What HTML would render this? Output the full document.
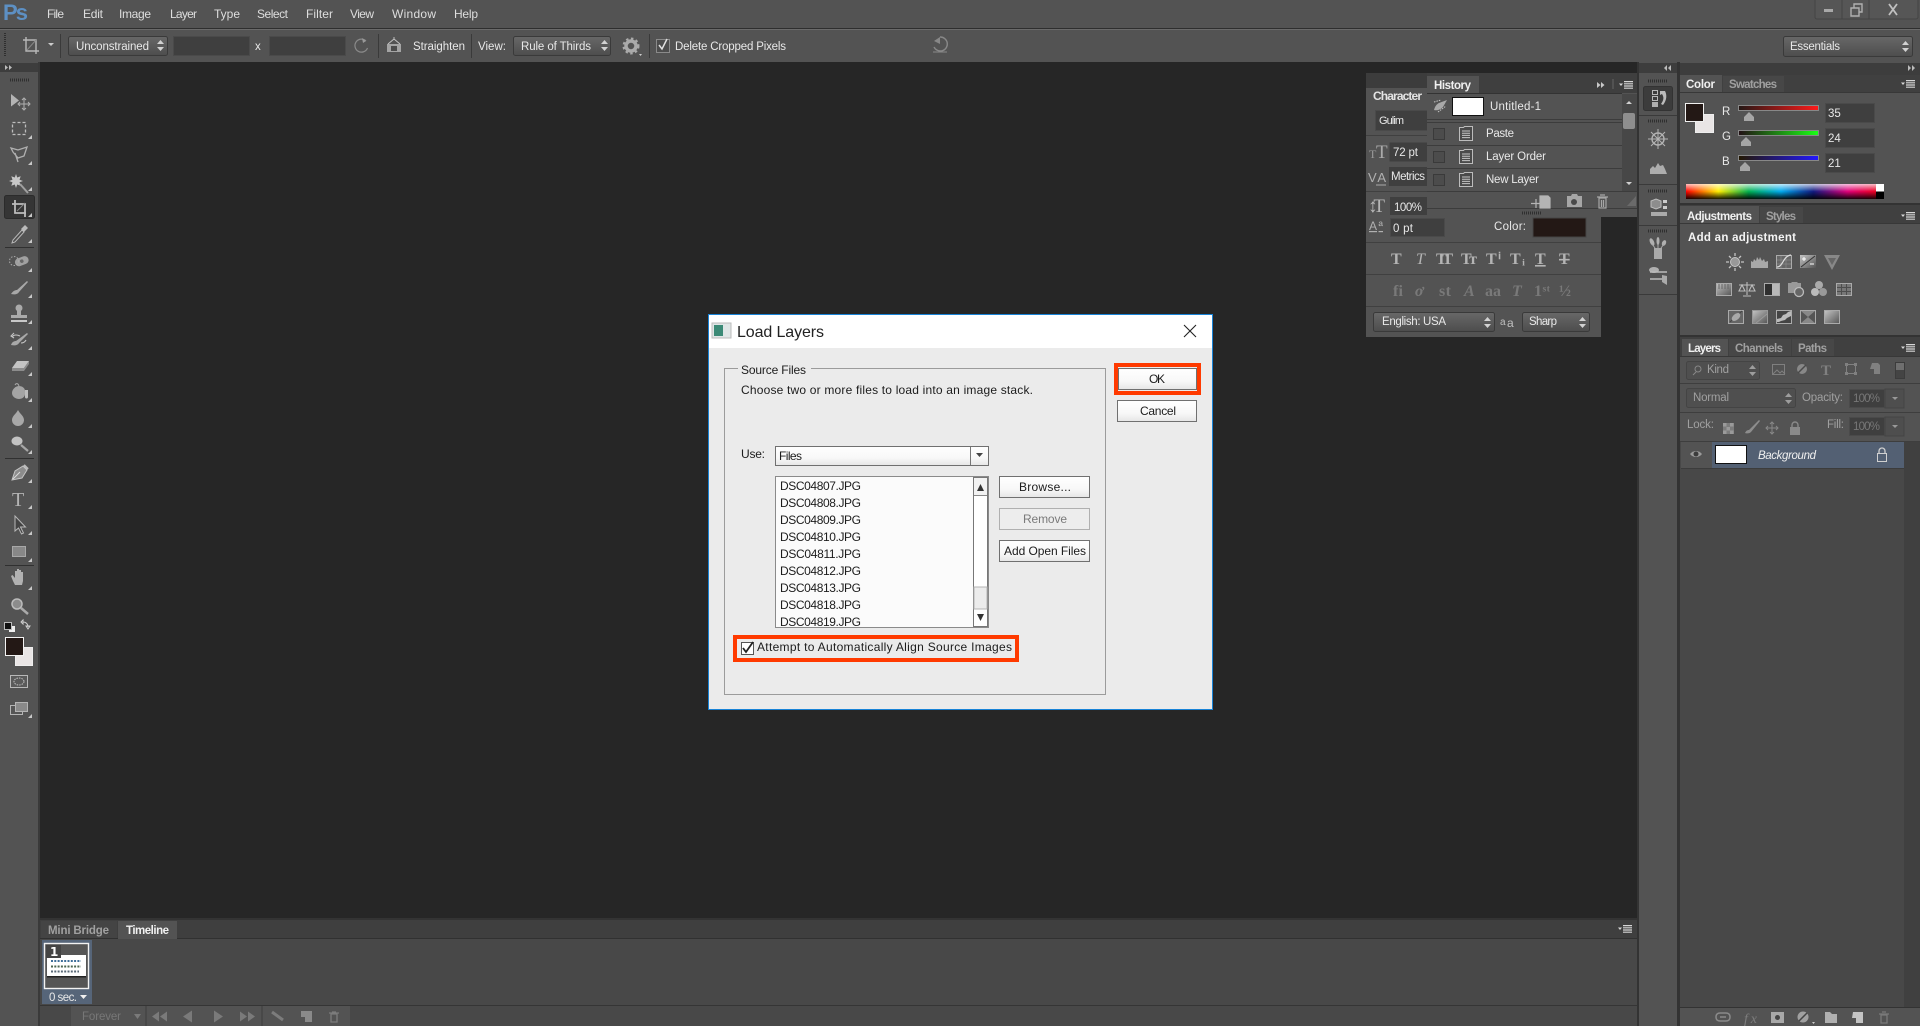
<!DOCTYPE html>
<html><head><meta charset="utf-8"><title>Photoshop Load Layers</title>
<style>
html,body{margin:0;padding:0;background:#262626;overflow:hidden}
svg{display:block}
text{font-family:"Liberation Sans","DejaVu Sans",sans-serif;font-size:11.5px;fill:#d6d6d6}
.m{font-size:12px;fill:#dedede}
.b{fill:#f0f0f0;font-weight:bold}
.t{fill:#e8e8e8}
.o{fill:#a0a0a0}
.dim{fill:#777}
.d{font-size:12px;fill:#1c1c1c}
.ic{fill:#a9a9a9;stroke:none}
.il{fill:none;stroke:#b5b5b5;stroke-width:1.3}
.serif{font-family:"Liberation Serif",serif;font-size:16px;fill:#b4b4b4;font-weight:bold}
</style></head><body>
<svg xmlns="http://www.w3.org/2000/svg" width="1920" height="1026" viewBox="0 0 1920 1026">
<defs>
<linearGradient id="sel" x1="0" y1="0" x2="0" y2="1"><stop offset="0" stop-color="#686868"/><stop offset="1" stop-color="#4d4d4d"/></linearGradient>
<linearGradient id="btn" x1="0" y1="0" x2="0" y2="1"><stop offset="0" stop-color="#fff"/><stop offset=".6" stop-color="#f8f8f8"/><stop offset="1" stop-color="#e6e6e6"/></linearGradient>
<linearGradient id="rs" x1="0" x2="1"><stop offset="0" stop-color="#231815"/><stop offset="1" stop-color="#ff1a1a"/></linearGradient>
<linearGradient id="gs" x1="0" x2="1"><stop offset="0" stop-color="#230f15"/><stop offset="1" stop-color="#1aff15"/></linearGradient>
<linearGradient id="bs" x1="0" x2="1"><stop offset="0" stop-color="#231800"/><stop offset="1" stop-color="#2318ff"/></linearGradient>
<linearGradient id="spec" x1="0" x2="1"><stop offset="0" stop-color="#ff0000"/><stop offset=".17" stop-color="#ffee00"/><stop offset=".33" stop-color="#00b050"/><stop offset=".5" stop-color="#00aaee"/><stop offset=".67" stop-color="#101a80"/><stop offset=".85" stop-color="#e0007a"/><stop offset="1" stop-color="#ee0022"/></linearGradient>
<linearGradient id="fade" x1="0" y1="0" x2="0" y2="1"><stop offset="0" stop-color="#fff" stop-opacity=".75"/><stop offset=".5" stop-color="#fff" stop-opacity="0"/><stop offset=".5" stop-color="#000" stop-opacity="0"/><stop offset="1" stop-color="#000" stop-opacity=".9"/></linearGradient>
<linearGradient id="adj" x1="0" y1="0" x2="1" y2="1"><stop offset="0" stop-color="#c4c4c4"/><stop offset="1" stop-color="#555"/></linearGradient>
<symbol id="ud" viewBox="0 0 7 11" width="7" height="11"><path d="M3.5 0 7 4H0zM0 7h7l-3.5 4z" fill="#d2d2d2"/></symbol>
<symbol id="menu" viewBox="0 0 14 8" width="14" height="8"><path d="M0 2.500h4L2 5zM5 0h9v1.200H5zM5 2.200h9v1.200H5zM5 4.400h9v1.200H5zM5 6.600h9v1.200H5z" fill="#d6d6d6"/></symbol>
<symbol id="tri" viewBox="0 0 4 4" width="4" height="4"><path d="M4 0v4H0z" fill="#c8c8c8"/></symbol>
<symbol id="doc" viewBox="0 0 14 15" width="14" height="15"><path d="M.5 1.500h4l1-1h8v14H.5z" fill="#4a4a4a" stroke="#bcbcbc"/><path d="M3 5h8M3 7.200h8M3 9.400h8M3 11.600h8" stroke="#c6c6c6"/></symbol>
</defs>

<!-- app background -->
<rect width="1920" height="1026" fill="#262626"/>
<rect width="1920" height="28" fill="#535353"/>
<rect y="28" width="1920" height="1" fill="#2e2e2e"/>
<rect y="29" width="1920" height="33" fill="#535353"/>
<rect y="29" width="1920" height="1" fill="#6a6a6a"/>

<!-- Menu bar -->
<text x="3" y="20" style="font-size:22px;font-weight:bold;fill:#5d90c4" textLength="25">Ps</text>
<text class="m" x="47" y="18" textLength="17">File</text>
<text class="m" x="83" y="18" textLength="20">Edit</text>
<text class="m" x="119" y="18" textLength="32">Image</text>
<text class="m" x="170" y="18" textLength="27">Layer</text>
<text class="m" x="214" y="18" textLength="26">Type</text>
<text class="m" x="257" y="18" textLength="31">Select</text>
<text class="m" x="306" y="18" textLength="27">Filter</text>
<text class="m" x="350" y="18" textLength="24">View</text>
<text class="m" x="392" y="18" textLength="44">Window</text>
<text class="m" x="454" y="18" textLength="24">Help</text>
<!-- window buttons -->
<rect x="1815" y="-2" width="103" height="21" rx="2" fill="#565656" stroke="#444"/>
<path d="M1842 0v19M1869 0v19" stroke="#444"/>
<rect x="1824" y="9" width="9" height="3" fill="#a8a8a8"/>
<path d="M1851 8h8v8h-8zM1854 8V4h8v8h-3" fill="none" stroke="#b0b0b0" stroke-width="1.400"/>
<path d="M1889 4l8 11M1897 4l-8 11" stroke="#c0c0c0" stroke-width="1.800"/>

<!-- Options bar -->
<line x1="5" y1="33" x2="5" y2="56" stroke="#2f2f2f" stroke-width="2" stroke-dasharray="1 1"/>
<g fill="none" stroke="#b8b8b8" stroke-width="1.400"><path d="M26 37v14h13M23 40h13v14"/></g>
<path d="M27 50l9-10" stroke="#888"/>
<path d="M48 43h6l-3 3z" fill="#ccc"/>
<path d="M60.500 34v24M378.500 34v24M471.500 34v24M649.500 34v24" stroke="#3a3a3a"/>
<rect x="68.500" y="36.500" width="99" height="19" rx="2" fill="url(#sel)" stroke="#3a3a3a"/>
<text class="t" x="76" y="50" textLength="73">Unconstrained</text>
<use href="#ud" x="157" y="40"/>
<rect x="173.500" y="36.500" width="76" height="19" fill="#3f3f3f" stroke="#4a4a4a"/>
<text class="t" x="255" y="50">x</text>
<rect x="269.500" y="36.500" width="76" height="19" fill="#3f3f3f" stroke="#4a4a4a"/>
<path d="M366 41a6.500 6.500 0 1 0 1.500 7" fill="none" stroke="#8a8a8a" stroke-width="1.200"/><path d="M362 38l4 3-3 2z" fill="#999"/>
<rect x="387" y="44" width="14" height="8" fill="#a4a4a4"/><path d="M388 44l6-5 6 5" fill="none" stroke="#c4c4c4"/><rect x="391" y="46" width="6" height="5" fill="#4c4c4c"/><path d="M394 37v2" stroke="#bbb"/>
<text class="t" x="413" y="50" textLength="52">Straighten</text>
<text class="t" x="478" y="50" textLength="28">View:</text>
<rect x="513.500" y="36.500" width="97" height="19" rx="2" fill="url(#sel)" stroke="#3a3a3a"/>
<text class="t" x="521" y="50" textLength="70">Rule of Thirds</text>
<use href="#ud" x="601" y="40"/>
<circle cx="631" cy="46" r="5" fill="none" stroke="#aaa" stroke-width="3.500"/><circle cx="631" cy="46" r="7.500" fill="none" stroke="#aaa" stroke-width="2" stroke-dasharray="2.500 2.500"/>
<path d="M639 54h3l-1.500 2z" fill="#ccc"/>
<rect x="656.500" y="39.500" width="13" height="13" fill="#4c4c4c" stroke="#8a8a8a"/>
<path d="M659 45l3 4 5-10" fill="none" stroke="#e0e0e0" stroke-width="1.500"/>
<text class="t" x="675" y="50" textLength="111">Delete Cropped Pixels</text>
<path d="M940 37a7 7 0 1 1-6 10" fill="none" stroke="#888" stroke-width="1.400"/><path d="M934 41l6-4v7z" fill="#888"/><path d="M933 52h14" stroke="#888"/>
<rect x="1783.500" y="36.500" width="129" height="20" rx="2" fill="url(#sel)" stroke="#3a3a3a"/>
<text class="t" x="1790" y="50" textLength="50">Essentials</text>
<use href="#ud" x="1902" y="41"/>

<!-- Left toolbar -->
<rect x="0" y="62" width="38" height="964" fill="#535353"/>
<rect x="38" y="62" width="2" height="964" fill="#3a3a3a"/>
<rect x="0" y="63" width="38" height="9" fill="#3d3d3d"/>
<path d="M5 65l3 2.500-3 2.500zM9 65l3 2.500-3 2.500z" fill="#bbb"/>
<line x1="10" y1="80" x2="29" y2="80" stroke="#2f2f2f" stroke-width="3" stroke-dasharray="1 1"/>
<rect x="4.500" y="195.500" width="30" height="23" rx="2" fill="#353535" stroke="#2b2b2b"/>
<path d="M5 247.500h29M5 458.500h29M5 565.500h29" stroke="#303030"/>
<!-- tool flyout triangles -->
<g>
<use href="#tri" x="28" y="135"/><use href="#tri" x="28" y="161"/><use href="#tri" x="28" y="187"/><use href="#tri" x="28" y="213"/><use href="#tri" x="28" y="239"/><use href="#tri" x="28" y="268"/><use href="#tri" x="28" y="294"/><use href="#tri" x="28" y="320"/><use href="#tri" x="28" y="346"/><use href="#tri" x="28" y="372"/><use href="#tri" x="28" y="398"/><use href="#tri" x="28" y="424"/><use href="#tri" x="28" y="450"/><use href="#tri" x="28" y="479"/><use href="#tri" x="28" y="505"/><use href="#tri" x="28" y="531"/><use href="#tri" x="28" y="558"/><use href="#tri" x="28" y="586"/><use href="#tri" x="28" y="714"/>
</g>
<!-- move -->
<path d="M11 94l8 6.500-8 6z" fill="#b4b4b4"/><path d="M24 99v10M19 104h10" stroke="#b0b0b0"/><path d="M22 100l2-2 2 2M22 108l2 2 2-2M20 102l-2 2 2 2M28 102l2 2-2 2" fill="none" stroke="#b0b0b0"/>
<!-- marquee -->
<rect x="12.500" y="122.500" width="13" height="12" fill="none" stroke="#bdbdbd" stroke-width="1.300" stroke-dasharray="3 2"/>
<!-- lasso -->
<path d="M11 148l7 2 9-3-3 9-6 2-5-6zM15 153l3 9" fill="none" stroke="#b0b0b0" stroke-width="1.300"/>
<!-- wand -->
<path d="M16 174l1.200 3.500 3.500-1.200-1.200 3.500 3.500 1.200-3.500 1.200 1.200 3.500-3.500-1.200-1.200 3.500-1.200-3.500-3.500 1.200 1.200-3.500-3.500-1.200 3.500-1.200-1.200-3.500 3.500 1.200z" fill="#c8c8c8"/><path d="M20 184l8 9" stroke="#a0a0a0" stroke-width="2"/>
<!-- crop -->
<path d="M15 200v13h11M12 204h13v13" fill="none" stroke="#bcbcbc" stroke-width="1.800"/><path d="M17 211l8-8" stroke="#888"/>
<!-- eyedropper -->
<path d="M13 240l-1 3 3-1 9-10-2-2z" fill="#4e4e4e" stroke="#b8b8b8"/><path d="M21 229l4-4 3 3-4 4z" fill="#bbb"/>
<!-- heal -->
<g transform="rotate(-20 21 262)"><rect x="15" y="257.500" width="14" height="8" rx="4" fill="#a0a0a0"/><circle cx="22" cy="261.500" r="1.800" fill="#666"/></g><circle cx="14" cy="261" r="4.500" fill="none" stroke="#aaa" stroke-dasharray="1.500 1.500"/>
<!-- brush -->
<path d="M27 281l-10 9c-2 0-4 1-6 4 4 1 7 0 8-2l9-10z" fill="#a8a8a8"/>
<!-- stamp -->
<circle cx="19" cy="308" r="3.500" fill="#aaa"/><path d="M17 310h4v5h6v3H11v-3h6z" fill="#aaa"/><rect x="11" y="320" width="16" height="2" fill="#c8c8c8"/>
<!-- history brush -->
<path d="M27 333l-11 8c-2 0-4 1-5 4 4 1 7 0 8-2l9-9z" fill="#a8a8a8"/><path d="M12 337c2-3 6-2 8-1M14 333l-3 3 3 2M26 340c-1 2-3 3-5 3" fill="none" stroke="#c4c4c4" stroke-width="1.100"/>
<!-- eraser -->
<path d="M12 368l5-7h12l-5 7z" fill="#c4c4c4"/><path d="M12 368h12v3H12zM24 368l5-7v3l-5 7z" fill="#8c8c8c"/>
<!-- bucket -->
<path d="M12 393c0-4 4-7 7-7s6 2 6 5v3c0 3-3 5-6 5s-7-2-7-6z" fill="#a4a4a4"/><path d="M19 386c-1-3-3-3-4-1" fill="none" stroke="#aaa"/><path d="M25 390h3v7a1.500 1.500 0 0 1-3 0z" fill="#bcbcbc"/>
<!-- blur -->
<path d="M18 410c-2 4-6 6-6 10a6 6 0 0 0 12 0c0-4-4-6-6-10z" fill="#a8a8a8"/>
<!-- dodge -->
<ellipse cx="17" cy="441" rx="5.500" ry="4.500" fill="#c2c2c2"/><path d="M21 445l7 6" stroke="#a6a6a6" stroke-width="2.200"/>
<!-- pen -->
<path d="M12 480l3-9 8-5 4 4-5 8z" fill="#8c8c8c" stroke="#c4c4c4"/><path d="M13 479l7-7" stroke="#dadada"/><path d="M24 465l4 4" stroke="#bbb" stroke-width="2"/>
<!-- type -->
<text x="12" y="506" style="font-family:'Liberation Serif',serif;font-size:20px;fill:#b4b4b4">T</text>
<!-- path select -->
<path d="M15 516v15l3.500-3 3 6 2-1-3-6h5z" fill="#444" stroke="#b8b8b8"/>
<!-- shape -->
<rect x="12.500" y="546.500" width="13" height="10" fill="#888" stroke="#a8a8a8"/>
<!-- hand -->
<path d="M13 581l-2-5 1.500-1 2.500 3v-7h2v6-8h2v8-7h2v7-5h2v9l-1 4H15z" fill="#b2b2b2"/>
<!-- zoom -->
<circle cx="17" cy="604" r="5" fill="#8c8c8c" stroke="#bcbcbc" stroke-width="1.500"/><path d="M21 608l7 6" stroke="#aaa" stroke-width="2.500"/>
<!-- default colors -->
<rect x="9" y="626" width="6" height="6" fill="#eee"/><rect x="4.500" y="622.500" width="7" height="7" fill="#111" stroke="#bbb"/>
<path d="M23 622c3 0 5 2 5 5M23 620v4l-2-2zM26 626h4l-2 3z" fill="none" stroke="#cfcfcf"/>
<!-- fg bg -->
<rect x="15.500" y="647.500" width="17" height="18" fill="#e9e5e5" stroke="#eee"/>
<rect x="5.500" y="637.500" width="18" height="18" fill="#231815" stroke="#f2f2f2"/>
<!-- quick mask -->
<rect x="10.500" y="675.500" width="17" height="12" fill="#5a5a5a" stroke="#b8b8b8"/><ellipse cx="19" cy="681.500" rx="5" ry="3.500" fill="none" stroke="#c0c0c0" stroke-dasharray="1.500 1"/>
<!-- screen -->
<rect x="10.500" y="705.500" width="12" height="9" fill="#555" stroke="#b4b4b4"/><rect x="15.500" y="702.500" width="12" height="9" fill="#8a8a8a" stroke="#b4b4b4"/>

<!-- Timeline panel -->
<rect x="40" y="918" width="1597" height="2" fill="#333"/>
<rect x="40" y="920" width="1597" height="106" fill="#484848"/>
<rect x="40" y="920" width="1597" height="18" fill="#3f3f3f"/>
<rect x="40" y="938" width="1597" height="1" fill="#313131"/>
<rect x="41" y="921" width="76" height="17" fill="#444"/>
<rect x="118" y="921" width="59" height="18" fill="#535353"/>
<text class="o" x="48" y="934" textLength="61" style="font-weight:bold">Mini Bridge</text>
<text x="126" y="934" textLength="43" style="font-weight:bold;fill:#f0f0f0">Timeline</text>
<use href="#menu" x="1618" y="925"/>
<rect x="42" y="940" width="50" height="64" fill="#566579"/>
<rect x="44.500" y="943.500" width="44" height="45" fill="#555" stroke="#f2f2f2" stroke-width="1.400"/>
<rect x="47" y="955" width="39" height="22" fill="#fff"/>
<line x1="51" y1="961" x2="81" y2="961" stroke="#3f6f9a" stroke-width="2" stroke-dasharray="2 1.300"/>
<line x1="51" y1="966.500" x2="81" y2="966.500" stroke="#4c6650" stroke-width="2" stroke-dasharray="2 1.300"/>
<line x1="51" y1="971.500" x2="79" y2="971.500" stroke="#5a6a78" stroke-width="2" stroke-dasharray="2 1.300"/>
<rect x="47" y="976" width="39" height="1.500" fill="#222"/>
<rect x="46" y="945" width="15" height="13" fill="#444"/>
<text x="50" y="956" style="font-weight:bold;font-size:12px;fill:#fff;font-family:'DejaVu Sans',sans-serif">1</text>
<text x="49" y="1001" class="t" textLength="28">0 sec.</text>
<path d="M80 995h7l-3.500 4z" fill="#f0f0f0"/>
<rect x="40" y="1005" width="1597" height="1" fill="#353535"/>
<rect x="71" y="1006" width="279" height="20" fill="#535353"/>
<path d="M146 1006v20M262 1006v20" stroke="#3e3e3e"/>
<text class="dim" x="82" y="1020" textLength="39">Forever</text>
<path d="M134 1014h7l-3.500 5zM152 1016.500l7-5v10zM160 1016.500l7-5v10zM183 1016.500l9-6v12zM214 1010.500l9 6-9 6zM240 1011.500l7 5-7 5zM248 1011.500l7 5-7 5z" fill="#7a7a7a"/>
<path d="M272 1012l11 8" stroke="#7c7c7c" stroke-width="3"/>
<path d="M301 1011h11v11h-7v-5h-4z" fill="#8a8a8a"/>
<path d="M329 1013h10M331 1014v8h6v-8zM332 1012h4" fill="none" stroke="#7c7c7c" stroke-width="1.300"/>

<!-- Character panel -->
<rect x="1366" y="73" width="235" height="264" fill="#535353"/>
<rect x="1366" y="73" width="235" height="15" fill="#3c3c3c"/>
<rect x="1366" y="88" width="62" height="17" fill="#535353"/>
<text x="1373" y="100" textLength="49" style="font-size:12px;font-weight:bold;fill:#e4e4e4">Character</text>
<rect x="1375.500" y="110.500" width="60" height="20" fill="#3f3f3f" stroke="#4a4a4a"/>
<text class="t" x="1379" y="124" textLength="25" style="font-size:11px">Gulim</text>
<path d="M1366 135.500h235M1366 191.500h235M1366 242.500h235M1366 274.500h235M1366 306.500h235" stroke="#404040"/>
<text x="1369" y="158" style="font-family:'Liberation Serif',serif;font-size:12px;fill:#999">T</text><text x="1376" y="158" style="font-family:'Liberation Serif',serif;font-size:19px;fill:#aaa">T</text>
<rect x="1389.500" y="142.500" width="50" height="19" fill="#3f3f3f"/>
<text class="t" x="1393" y="156" textLength="25">72 pt</text>
<text x="1368" y="182" style="font-size:13px;fill:#b0b0b0" textLength="18">VA</text><path d="M1376 185h10" stroke="#aaa"/>
<rect x="1389" y="167" width="50" height="19" fill="#3f3f3f"/>
<text class="t" x="1391" y="180" textLength="34">Metrics</text>
<text x="1368" y="212" style="font-family:'Liberation Serif',serif;font-size:19px;fill:#b8b8b8" textLength="17">↕T</text>
<rect x="1390" y="197" width="50" height="18" fill="#3f3f3f"/>
<text class="t" x="1394" y="211" textLength="28">100%</text>
<text x="1369" y="230" style="font-size:12px;fill:#b0b0b0;text-decoration:underline" textLength="14">Aª</text>
<rect x="1390.500" y="218.500" width="54" height="18" fill="#3f3f3f" stroke="#4a4a4a"/>
<text class="t" x="1393" y="232" textLength="20">0 pt</text>
<text class="t" x="1494" y="230" textLength="32">Color:</text>
<rect x="1533" y="218" width="53" height="19" fill="#231815" stroke="#444"/>
<g class="serif">
<text class="serif" x="1391" y="264">T</text><text class="serif" x="1416" y="264" style="font-style:italic;font-weight:normal">T</text><text class="serif" x="1436" y="264" textLength="17">TT</text><text class="serif" x="1461" y="264" textLength="16">Tт</text><text class="serif" x="1486" y="264" textLength="15">Tⁱ</text><text class="serif" x="1510" y="264" textLength="15">Tᵢ</text><text class="serif" x="1535" y="264" style="text-decoration:underline">T</text><text class="serif" x="1559" y="264" style="text-decoration:line-through">T</text>
</g>
<g style="opacity:.55"><text class="serif" x="1393" y="296" textLength="10" style="fill:#999">fi</text><text class="serif" x="1415" y="296" style="font-style:italic;fill:#999">ơ</text><text class="serif" x="1439" y="296" textLength="12" style="fill:#999">st</text><text class="serif" x="1464" y="296" style="font-style:italic;fill:#999">A</text><text class="serif" x="1485" y="296" textLength="16" style="fill:#999">aa</text><text class="serif" x="1512" y="296" style="font-style:italic;fill:#999">T</text><text class="serif" x="1534" y="296" textLength="16" style="fill:#999">1ˢᵗ</text><text class="serif" x="1559" y="296" textLength="14" style="fill:#999">½</text></g>
<rect x="1373.500" y="312.500" width="121" height="19" rx="2" fill="url(#sel)" stroke="#3a3a3a"/>
<text class="t" x="1382" y="325" textLength="64">English: USA</text>
<use href="#ud" x="1484" y="317"/>
<text x="1500" y="325" style="font-size:10px;fill:#c0c0c0">a</text><text x="1507" y="327" style="font-size:12px;fill:#c0c0c0">a</text>
<rect x="1522.500" y="312.500" width="67" height="19" rx="2" fill="url(#sel)" stroke="#3a3a3a"/>
<text class="t" x="1529" y="325" textLength="28">Sharp</text>
<use href="#ud" x="1579" y="317"/>

<!-- History panel -->
<rect x="1427" y="73" width="210" height="144" fill="#535353"/>
<rect x="1427" y="73" width="210" height="20" fill="#3f3f3f"/>
<rect x="1427" y="76" width="52" height="17" fill="#535353"/>
<text class="b" x="1434" y="89" textLength="37">History</text>
<path d="M1597 82l3.500 3-3.500 3zM1601 82l3.500 3-3.500 3z" fill="#c8c8c8"/>
<path d="M1613 79v10" stroke="#666"/>
<use href="#menu" x="1619" y="81"/>
<rect x="1427" y="93" width="195" height="1" fill="#333"/>
<path d="M1447 100l-8 3c-2 1-4 3-5 7 4 1 7-1 9-3z" fill="#a9a9a9"/><path d="M1434 102l7-2M1438 112l8-6" fill="none" stroke="#c4c4c4" stroke-dasharray="1.500 1"/>
<rect x="1452.500" y="97.500" width="31" height="18" fill="#fff" stroke="#111"/>
<text class="t" x="1490" y="110" textLength="51">Untitled-1</text>
<path d="M1427 119.500h195M1427 122.500h195M1427 145.500h195M1427 168.500h195M1427 191.500h210M1427 208.500h210" stroke="#3c3c3c"/>
<rect x="1433.500" y="128.500" width="11" height="11" fill="#4c4c4c" stroke="#3a3a3a"/>
<rect x="1433.500" y="151.500" width="11" height="11" fill="#4c4c4c" stroke="#3a3a3a"/>
<rect x="1433.500" y="174.500" width="11" height="11" fill="#4c4c4c" stroke="#3a3a3a"/>
<use href="#doc" x="1459" y="126"/><use href="#doc" x="1459" y="149"/><use href="#doc" x="1459" y="172"/>
<text class="t" x="1486" y="137" textLength="28">Paste</text>
<text class="t" x="1486" y="160" textLength="60">Layer Order</text>
<text class="t" x="1486" y="183" textLength="53">New Layer</text>
<rect x="1622" y="94" width="15" height="97" fill="#474747"/>
<rect x="1623" y="113" width="12" height="16" rx="2" fill="#8e8e8e"/>
<path d="M1626 104h6l-3-3zM1626 182h6l-3 3z" fill="#d0d0d0"/>
<path d="M1540 196h8l2 2v10h-10zM1536 199v9M1531 203.500h10" fill="#b4b4b4" stroke="#b4b4b4" stroke-width="1.200"/>
<path d="M1567 196h4l1-2h5l1 2h4v11h-15z" fill="#a6a6a6"/><circle cx="1574" cy="202" r="3" fill="#4a4a4a"/>
<path d="M1597 197h11M1599 198v10h7v-10zM1600 195h5M1601.500 200v7M1603.500 200v7" fill="none" stroke="#a6a6a6" stroke-width="1.200"/>
<line x1="1522" y1="213" x2="1541" y2="213" stroke="#2f2f2f" stroke-width="3" stroke-dasharray="1 1"/>
<path d="M1636 196l-9 10h9z" fill="#6a6a6a"/>

<!-- Dock strip -->
<rect x="1637" y="62" width="2" height="964" fill="#333"/>
<rect x="1639" y="62" width="38" height="964" fill="#535353"/>
<rect x="1677" y="62" width="3" height="964" fill="#333"/>
<rect x="1639" y="63" width="38" height="10" fill="#3d3d3d"/>
<path d="M1667 65l-3 3 3 3zM1671 65l-3 3 3 3z" fill="#bbb"/>
<path d="M1639 115.500h38M1639 184.500h38M1639 225.500h38M1639 294.500h38" stroke="#3a3a3a"/>
<g stroke="#2f2f2f" stroke-width="3" stroke-dasharray="1 1"><line x1="1648" y1="81" x2="1667" y2="81"/><line x1="1648" y1="121" x2="1667" y2="121"/><line x1="1648" y1="191" x2="1667" y2="191"/><line x1="1648" y1="231" x2="1667" y2="231"/></g>
<rect x="1643.500" y="86.500" width="29" height="24" rx="2" fill="#3c3c3c" stroke="#333"/>
<rect x="1652.500" y="90.500" width="5" height="4" fill="none" stroke="#b8b8b8"/><rect x="1652.500" y="96.500" width="5" height="4" fill="none" stroke="#b8b8b8"/><rect x="1652" y="102" width="6" height="5" fill="#b0b0b0"/>
<path d="M1660 91h5c2 4 2 9-2 14l-2-1c3-4 3-7 1-10l-2 1z" fill="#bcbcbc"/>
<circle cx="1658" cy="139" r="6" fill="none" stroke="#b4b4b4" stroke-width="1.400"/><path d="M1658 129v20M1648 139h20M1651 132l14 14M1665 132l-14 14" stroke="#b4b4b4"/>
<path d="M1650 174v-5l3-3 2 2 3-5 2 3 3-1 2 4 2 5z" fill="#adadad"/>
<path d="M1651 201l5-2 5 2v6l-5 2-5-2z" fill="#8d8d8d" stroke="#bcbcbc"/><rect x="1663" y="200" width="4" height="3" fill="#ccc"/><rect x="1663" y="206" width="4" height="3" fill="#ccc"/><rect x="1651" y="212" width="16" height="4" fill="#aaa"/>
<path d="M1654 248h8v11h-8z" fill="#aaa"/><ellipse cx="1652" cy="242" rx="2" ry="4" transform="rotate(-25 1652 242)" fill="#b0b0b0"/><ellipse cx="1658" cy="241" rx="1.500" ry="4" fill="#b0b0b0"/><ellipse cx="1664" cy="243" rx="2" ry="3" transform="rotate(25 1664 243)" fill="#b0b0b0"/><path d="M1655 248l-3-4M1658 248v-5M1661 248l3-4" stroke="#aaa"/>
<ellipse cx="1654" cy="270" rx="5" ry="3" fill="#b0b0b0"/><path d="M1650 272h17M1650 279h12" stroke="#bbb" stroke-width="1.500"/><path d="M1662 275l5 1v9l-5-3z" fill="#aaa"/>

<!-- Right panels -->
<rect x="1680" y="62" width="240" height="964" fill="#535353"/>
<rect x="1680" y="63" width="240" height="12" fill="#3d3d3d"/>
<path d="M1908 65l3 3-3 3zM1912 65l3 3-3 3z" fill="#bbb"/>
<!-- Color -->
<rect x="1680" y="75" width="240" height="17" fill="#404040"/>
<rect x="1680" y="75" width="42" height="17" fill="#535353"/>
<rect x="1723" y="76" width="61" height="16" fill="#474747"/>
<path d="M1680 92.500h240" stroke="#383838"/>
<text class="b" x="1686" y="88" textLength="29">Color</text>
<text class="o" x="1729" y="88" textLength="48" style="font-weight:bold">Swatches</text>
<use href="#menu" x="1901" y="80"/>
<rect x="1695.500" y="114.500" width="18" height="18" fill="#e9e5e5" stroke="#eee"/>
<rect x="1685.500" y="103.500" width="18" height="18" fill="#231815" stroke="#f0f0f0"/>
<text class="t" x="1722" y="115">R</text><text class="t" x="1722" y="140">G</text><text class="t" x="1722" y="165">B</text>
<rect x="1738.500" y="105.500" width="80" height="5" fill="url(#rs)" stroke="#888"/>
<rect x="1738.500" y="130.500" width="80" height="5" fill="url(#gs)" stroke="#888"/>
<rect x="1738.500" y="155.500" width="80" height="5" fill="url(#bs)" stroke="#888"/>
<path d="M1749 112l5 5v4h-10v-4zM1746 137l5 5v4h-10v-4zM1745 162l5 5v4h-10v-4z" fill="#a6a6a6"/>
<rect x="1825.500" y="103.500" width="49" height="19" fill="#3f3f3f" stroke="#4a4a4a"/><rect x="1825.500" y="128.500" width="49" height="19" fill="#3f3f3f" stroke="#4a4a4a"/><rect x="1825.500" y="153.500" width="49" height="19" fill="#3f3f3f" stroke="#4a4a4a"/>
<text class="t" x="1828" y="117">35</text><text class="t" x="1828" y="142">24</text><text class="t" x="1828" y="167">21</text>
<rect x="1686" y="184" width="190" height="15" fill="url(#spec)"/>
<rect x="1686" y="184" width="190" height="15" fill="url(#fade)"/>
<rect x="1876" y="184" width="8" height="7.500" fill="#fff"/><rect x="1876" y="191.500" width="8" height="7.500" fill="#000"/>
<rect x="1680" y="203" width="240" height="2" fill="#333"/>
<!-- Adjustments -->
<rect x="1680" y="205" width="240" height="18" fill="#404040"/>
<rect x="1680" y="206" width="79" height="17" fill="#535353"/>
<rect x="1760" y="207" width="43" height="16" fill="#474747"/>
<path d="M1680 223.500h240" stroke="#383838"/>
<text class="b" x="1687" y="220" textLength="65">Adjustments</text>
<text class="o" x="1766" y="220" textLength="30" style="font-weight:bold">Styles</text>
<use href="#menu" x="1901" y="212"/>
<text x="1688" y="241" textLength="108" style="font-weight:bold;fill:#f4f4f4">Add an adjustment</text>
<!-- adj icons row 1 -->
<circle cx="1735" cy="262" r="4.500" fill="#999" stroke="#c4c4c4"/><path d="M1735 253v3M1735 268v3M1726 262h3M1741 262h3M1729 256l2 2M1739 266l2 2M1741 256l-2 2M1731 266l-2 2" stroke="#c4c4c4" stroke-width="1.300"/>
<path d="M1751 268v-7l2 1 1-3 2 2 1-4 2 3 1-3 2 4 2-2 1 3 3-1v7z" fill="#a8a8a8"/>
<rect x="1776.500" y="255.500" width="15" height="13" fill="#666" stroke="#aaa"/><path d="M1781 256v12M1786 256v12M1777 260h14M1777 264h14" stroke="#888" stroke-width=".7"/><path d="M1777 267c6 0 6-11 14-12" fill="none" stroke="#ddd" stroke-width="1.200"/>
<rect x="1800" y="255" width="16" height="13" fill="url(#adj)"/><path d="M1801 267l14-11" stroke="#333"/><path d="M1802 259h4M1804 257v4M1810 264h4" stroke="#fff"/>
<path d="M1824 255h16l-8 15z" fill="#888"/><path d="M1828 258h8l-4 7z" fill="#666"/>
<!-- row 2 -->
<rect x="1716.500" y="283.500" width="15" height="12" fill="url(#adj)" stroke="#aaa"/><path d="M1719 284v5M1722 284v5M1725 284v5M1728 284v5" stroke="#666"/>
<path d="M1747 282v13M1739 285h16M1742 285l-3 6h6zM1752 285l-3 6h6zM1743 296h8" fill="none" stroke="#bbb" stroke-width="1.100"/>
<rect x="1764.500" y="283.500" width="15" height="12" fill="#2f2f2f" stroke="#aaa"/><rect x="1772" y="284" width="7" height="11" fill="#b8b8b8"/>
<path d="M1788 283h3l1-1h5l1 1h3v10h-13z" fill="#999"/><circle cx="1799" cy="292" r="4.500" fill="#666" stroke="#bbb" stroke-width="1.300"/>
<circle cx="1819" cy="285" r="4" fill="#aaa"/><circle cx="1815" cy="292" r="4" fill="#bbb"/><circle cx="1823" cy="292" r="4" fill="#999"/>
<rect x="1836.500" y="283.500" width="15" height="12" fill="#777" stroke="#aaa"/><path d="M1841.500 284v11M1846.500 284v11M1837 287.500h14M1837 291.500h14" stroke="#4d4d4d"/>
<!-- row 3 -->
<rect x="1728.500" y="310.500" width="15" height="13" fill="#666" stroke="#aaa"/><path d="M1730 322l12-11" stroke="#444"/><ellipse cx="1736" cy="317" rx="5" ry="3" transform="rotate(-40 1736 317)" fill="#aaa"/>
<rect x="1752.500" y="310.500" width="15" height="13" fill="url(#adj)" stroke="#999"/><path d="M1753 320l11-9M1756 323l11-9" stroke="#999"/>
<rect x="1776.500" y="310.500" width="15" height="13" fill="#444" stroke="#aaa"/><path d="M1777 319l4-1 2-3 3-1 2-2 3-1v5l-4 2-2 2-4 1-2 1h-2z" fill="#bbb"/>
<rect x="1800.500" y="310.500" width="15" height="13" fill="#888" stroke="#aaa"/><path d="M1801 311l7 6-7 6zM1815 311l-7 6 7 6z" fill="#555"/>
<rect x="1824.500" y="310.500" width="15" height="13" fill="url(#adj)" stroke="#aaa"/>
<!-- Layers -->
<rect x="1680" y="335" width="240" height="2" fill="#333"/>
<rect x="1680" y="337" width="240" height="19" fill="#404040"/>
<rect x="1682" y="339" width="46" height="17" fill="#535353"/>
<rect x="1729" y="339" width="62" height="17" fill="#474747"/>
<rect x="1792" y="339" width="42" height="17" fill="#474747"/>
<path d="M1680 356.500h240" stroke="#383838"/>
<text class="b" x="1688" y="352" textLength="33">Layers</text>
<text class="o" x="1735" y="352" textLength="48" style="font-weight:bold">Channels</text>
<text class="o" x="1798" y="352" textLength="29" style="font-weight:bold">Paths</text>
<use href="#menu" x="1901" y="344"/>
<rect x="1686.500" y="361.500" width="73" height="18" rx="2" fill="#4f4f4f" stroke="#444"/>
<circle cx="1698" cy="369" r="3" fill="none" stroke="#888"/><path d="M1696 372l-3 3" stroke="#888"/>
<text class="o" x="1707" y="373" textLength="22">Kind</text>
<g opacity=".6"><use href="#ud" x="1749" y="365"/></g>
<g fill="none" stroke="#7f7f7f"><rect x="1772.500" y="364.500" width="12" height="10"/><path d="M1773 374l4-4 3 3 2-2 3 3"/></g>
<circle cx="1802" cy="369" r="5" fill="#888"/><path d="M1798 373l8-8" stroke="#4a4a4a" stroke-width="1.500"/>
<text x="1821" y="375" style="font-family:'Liberation Serif',serif;font-size:15px;font-weight:bold;fill:#808080">T</text>
<rect x="1846.500" y="364.500" width="9" height="9" fill="none" stroke="#808080"/><path d="M1845 363h3v3h-3zM1854 363h3v3h-3zM1845 372h3v3h-3zM1854 372h3v3h-3z" fill="#808080"/>
<path d="M1872 363h6l2 2v9h-6v-5h-4z" fill="#808080"/>
<rect x="1895.500" y="362.500" width="9" height="16" fill="#444" stroke="#3c3c3c"/><rect x="1896" y="363" width="8" height="7" fill="#6f6f6f"/>
<path d="M1680 383.500h240M1680 412.500h240M1680 441.500h240" stroke="#3e3e3e"/>
<rect x="1686.500" y="388.500" width="109" height="19" rx="2" fill="#4f4f4f" stroke="#444"/>
<text class="o" x="1693" y="401" textLength="36">Normal</text>
<g opacity=".6"><use href="#ud" x="1785" y="393"/></g>
<text class="o" x="1802" y="401" textLength="41">Opacity:</text>
<rect x="1849.500" y="389.500" width="35" height="18" fill="#3f3f3f" stroke="#4a4a4a"/><rect x="1885" y="389" width="19" height="19" fill="#4e4e4e" stroke="#444"/>
<text class="dim" x="1853" y="402" textLength="27">100%</text>
<path d="M1892 397h6l-3 3z" fill="#999"/>
<text class="o" x="1687" y="428" textLength="27">Lock:</text>
<g fill="#7c7c7c"><rect x="1723" y="423" width="11" height="11"/><rect x="1723" y="423" width="3.500" height="3.500" fill="#9a9a9a"/><rect x="1730" y="423" width="3.500" height="3.500" fill="#9a9a9a"/><rect x="1726.500" y="427" width="3.500" height="3.500" fill="#9a9a9a"/><rect x="1723" y="430.500" width="3.500" height="3.500" fill="#9a9a9a"/><rect x="1730" y="430.500" width="3.500" height="3.500" fill="#9a9a9a"/></g>
<path d="M1759 420l-10 10c-2 0-3 1-4 3 3 1 5 0 6-1l9-11z" fill="#8d8d8d"/>
<path d="M1772 422v12M1766 428h12M1770 424l2-2 2 2M1770 432l2 2 2-2M1768 426l-2 2 2 2M1776 426l2 2-2 2" fill="none" stroke="#888"/>
<rect x="1790" y="427" width="10" height="8" fill="#8a8a8a"/><path d="M1792 427v-2a3 3 0 0 1 6 0v2" fill="none" stroke="#8a8a8a" stroke-width="1.400"/>
<text class="o" x="1827" y="428" textLength="17">Fill:</text>
<rect x="1849.500" y="417.500" width="35" height="18" fill="#3f3f3f" stroke="#4a4a4a"/><rect x="1885" y="417" width="19" height="19" fill="#4e4e4e" stroke="#444"/>
<text class="dim" x="1853" y="430" textLength="27">100%</text>
<path d="M1892 425h6l-3 3z" fill="#999"/>
<!-- layer row & body -->
<rect x="1680" y="442" width="240" height="566" fill="#484848"/>
<rect x="1904" y="442" width="16" height="566" fill="#404040"/>
<rect x="1681" y="442" width="31" height="26" fill="#535353"/>
<rect x="1712" y="442" width="192" height="26" fill="#536073"/>
<rect x="1681" y="468" width="223" height="1" fill="#3c3c3c"/>
<path d="M1690 454c3-4 9-4 12 0-3 4-9 4-12 0z" fill="#9a9a9a"/><circle cx="1696" cy="454" r="2.500" fill="#3c3c3c"/>
<rect x="1715.500" y="445.500" width="31" height="18" fill="#fff" stroke="#111"/>
<text x="1758" y="459" textLength="58" style="font-style:italic;fill:#f0f0f0">Background</text>
<rect x="1877.500" y="453.500" width="9" height="8" fill="none" stroke="#d0d0d0"/><path d="M1879 453v-2a3 3 0 0 1 6 0v2" fill="none" stroke="#d0d0d0" stroke-width="1.300"/>
<rect x="1680" y="1007" width="240" height="1" fill="#333"/>
<rect x="1680" y="1008" width="240" height="18" fill="#535353"/>
<path d="M1716 1017c0-3 2-4 4-4h6c2 0 4 1 4 4s-2 4-4 4h-6c-2 0-4-1-4-4zM1720 1017h6" fill="none" stroke="#8a8a8a" stroke-width="1.500"/>
<text x="1744" y="1023" style="font-family:'Liberation Serif',serif;font-style:italic;font-size:14px;fill:#7d7d7d" textLength="13">fx</text>
<rect x="1771" y="1012" width="13" height="11" fill="#a8a8a8"/><circle cx="1777.500" cy="1017.500" r="2.500" fill="#444"/>
<circle cx="1803" cy="1017" r="5.500" fill="#a0a0a0"/><path d="M1799 1021l8-8" stroke="#444" stroke-width="1.500"/><path d="M1812 1022h3l-1.500 2z" fill="#ccc"/>
<path d="M1825 1012h5l2 2h5v9h-12z" fill="#b0b0b0"/>
<path d="M1853 1012h10v11h-7v-5h-4z" fill="#c4c4c4"/>
<path d="M1879 1014h10M1881 1015v8h6v-8zM1882 1012h4" fill="none" stroke="#7a7a7a" stroke-width="1.300"/>

<!-- Dialog -->
<rect x="708.500" y="314.500" width="504" height="395" fill="#ebebeb" stroke="#1883d7"/>
<rect x="709" y="315" width="503" height="33" fill="#fff"/>
<rect x="712" y="323" width="19" height="15" fill="#dfe6e6" stroke="#bbb"/><rect x="714" y="325" width="9" height="11" fill="#3b8a76"/>
<text x="737" y="337" style="font-size:16px;fill:#222" textLength="87">Load Layers</text>
<path d="M1184 325l12 12M1196 325l-12 12" stroke="#222" stroke-width="1.100"/>
<path d="M738 368.500h-13.500v326h381v-326H811" fill="none" stroke="#9b9b9b"/>
<text class="d" x="741" y="374" textLength="65">Source Files</text>
<text class="d" x="741" y="394" textLength="292">Choose two or more files to load into an image stack.</text>
<text class="d" x="741" y="458" textLength="24">Use:</text>
<rect x="775.500" y="446.500" width="213" height="19" fill="url(#btn)" stroke="#707070"/>
<path d="M970.500 447v18" stroke="#777"/>
<path d="M976 453h7l-3.500 4z" fill="#444"/>
<text class="d" x="779" y="460" textLength="23">Files</text>
<!-- list -->
<svg x="775" y="476" width="214" height="152" viewBox="775 476 214 152">
<rect x="775.500" y="476.500" width="213" height="151" fill="#fbfbfb" stroke="#8a8a8a"/>
<text class="d" x="780" y="490" textLength="81">DSC04807.JPG</text>
<text class="d" x="780" y="507" textLength="81">DSC04808.JPG</text>
<text class="d" x="780" y="524" textLength="81">DSC04809.JPG</text>
<text class="d" x="780" y="541" textLength="81">DSC04810.JPG</text>
<text class="d" x="780" y="558" textLength="81">DSC04811.JPG</text>
<text class="d" x="780" y="575" textLength="81">DSC04812.JPG</text>
<text class="d" x="780" y="592" textLength="81">DSC04813.JPG</text>
<text class="d" x="780" y="609" textLength="81">DSC04818.JPG</text>
<text class="d" x="780" y="626" textLength="81">DSC04819.JPG</text>
<rect x="973.500" y="477.500" width="14" height="149" fill="#fff" stroke="#777"/>
<rect x="974" y="478" width="13" height="17" fill="#f2f2f2"/>
<path d="M974 495.500h13" stroke="#888"/>
<path d="M977 491h7l-3.500-7z" fill="#333"/>
<rect x="974" y="587" width="13" height="22" fill="#ececec" stroke="#b5b5b5"/>
<path d="M977 614h7l-3.500 7z" fill="#333"/>
</svg>
<rect x="999.500" y="476.500" width="90" height="21" fill="url(#btn)" stroke="#707070"/>
<text class="d" x="1019" y="491" textLength="52">Browse...</text>
<rect x="999.500" y="508.500" width="90" height="21" fill="#ededed" stroke="#b0b0b0"/>
<text class="d" x="1023" y="523" textLength="44" style="fill:#7a7a7a">Remove</text>
<rect x="999.500" y="540.500" width="90" height="21" fill="url(#btn)" stroke="#707070"/>
<text class="d" x="1004" y="555" textLength="82">Add Open Files</text>
<!-- OK -->
<rect x="1116" y="365" width="83" height="28" fill="none" stroke="#ff3a00" stroke-width="4"/>
<rect x="1118.500" y="368.500" width="78" height="21" fill="url(#btn)" stroke="#707070"/>
<text class="d" x="1149" y="383" textLength="16">OK</text>
<rect x="1117.500" y="400.500" width="79" height="21" fill="url(#btn)" stroke="#707070"/>
<text class="d" x="1140" y="415" textLength="36">Cancel</text>
<!-- align -->
<rect x="735" y="637" width="282" height="23" fill="#ebebeb" stroke="#ff3a00" stroke-width="4"/>
<rect x="741.500" y="642.500" width="12" height="12" fill="#fff" stroke="#555"/>
<path d="M743 648l3 4 7-10" fill="none" stroke="#222" stroke-width="1.800"/>
<text class="d" x="757" y="651" textLength="255">Attempt to Automatically Align Source Images</text>
</svg>
</body></html>
